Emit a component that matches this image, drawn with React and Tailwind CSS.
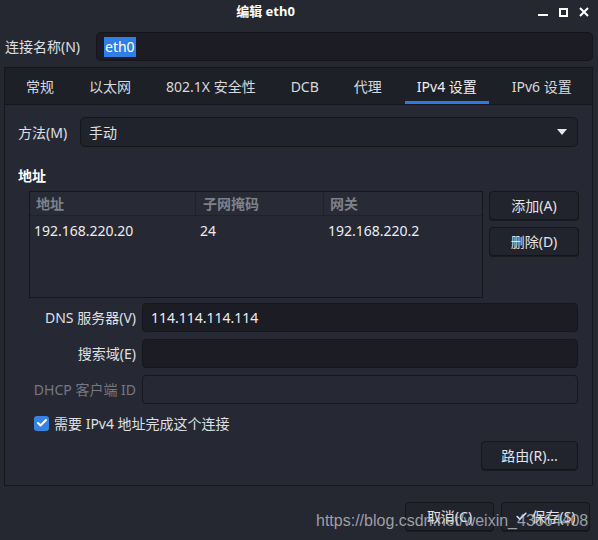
import { Check } from 'lucide-react'

const font = { fontFamily: '"Noto Sans", "Noto Sans CJK SC", sans-serif' }

const tabs = ['常规', '以太网', '802.1X 安全性', 'DCB', '代理', 'IPv4 设置', 'IPv6 设置']

function Button({ children, className = '' }) {
  return (
    <div className={`h-[29px] rounded-[4px] border border-[#15161b] bg-[#22242d] flex items-center justify-center text-[14px] text-[#e2e3e8] shadow-[0_1px_0_#1a1b20] ${className}`}>
      {children}
    </div>
  )
}

function Field({ label, value, disabled }) {
  return (
    <div className="flex items-center h-[29px]">
      <div className={`w-[124px] pr-[6px] text-right text-[14px] whitespace-nowrap ${disabled ? 'text-[#767984]' : 'text-[#dfe0e5]'}`}>{label}</div>
      <div className={`w-[436px] h-[29px] rounded-[4px] border flex items-center px-[8px] text-[14px] text-[#eceef2] ${disabled ? 'border-[#16171c] bg-[#262834]' : 'border-[#16171c] bg-[#1c1d24]'}`}>
        {value}
      </div>
    </div>
  )
}

export default function App() {
  return (
    <div style={font} className="relative w-[598px] h-[540px] overflow-hidden bg-[#252731] text-[#dfe0e5]">
      {/* Title bar */}
      <div className="h-[24px] flex items-center">
        <div className="flex-1" />
        <div className="mr-[58px] text-[13px] font-bold text-white">编辑 eth0</div>
        <div className="flex-1 flex justify-end items-center gap-[11px] pr-[9px]">
          <div className="w-[10px] h-[2px] bg-white mt-[6px]" />
          <div className="w-[9px] h-[9px] border-2 border-white" />
          <svg width="10" height="10" viewBox="0 0 10 10"><path d="M1 1L9 9M9 1L1 9" stroke="white" strokeWidth="2" /></svg>
        </div>
      </div>

      {/* Connection name */}
      <div className="flex items-center mt-[8px] pl-[5px]">
        <div className="w-[91px] text-[14px]">连接名称(N)</div>
        <div className="w-[497px] h-[29px] rounded-[5px] border border-[#14151a] bg-[#1c1d24] flex items-center px-[7px] text-[14px]">
          <span className="bg-[#2f7fe6] text-white px-[1px] leading-[20px]">eth0</span>
        </div>
      </div>

      {/* Notebook */}
      <div className="mx-[4px] mt-[6px] h-[419px] w-[589px] border border-[#15161b] bg-[#262833] flex flex-col">
        <div className="h-[37px] bg-[#1e2027] border-b border-[#15161b] flex items-stretch pl-[9px] gap-[11px] text-[14px]">
          {tabs.map(t => (
            <div key={t} className={`px-[12px] flex items-center relative whitespace-nowrap ${t === 'IPv4 设置' ? 'text-[#eef0f4]' : 'text-[#d8d9de]'}`}>
              {t}
              {t === 'IPv4 设置' && <div className="absolute left-0 right-0 bottom-0 h-[3px] bg-[#2d7be2]" />}
            </div>
          ))}
        </div>

        <div className="px-[13px] pt-[12px]">
          {/* Method */}
          <div className="flex items-center h-[30px]">
            <div className="w-[62px] text-[14px]">方法(M)</div>
            <div className="w-[498px] h-[30px] rounded-[5px] border border-[#15161b] bg-[#21232c] flex items-center justify-between pl-[8px] pr-[10px] text-[14px]">
              手动
              <svg width="10" height="6" viewBox="0 0 10 6"><path d="M0 0H10L5 6Z" fill="#e6e7ea" /></svg>
            </div>
          </div>

          <div className="mt-[18px] text-[14px] font-bold text-white">地址</div>

          {/* Address table + buttons */}
          <div className="flex mt-[5px] pl-[11px] gap-[6px]">
            <div className="w-[454px] h-[107px] border border-[#15161b] bg-[#262833]">
              <div className="h-[24px] flex items-center border-b border-[#202229] bg-[#282a35] text-[14px] font-bold text-[#7e818b]">
                <div className="w-[166px] pl-[6px] h-full flex items-center border-r border-[#202229]">地址</div>
                <div className="w-[128px] pl-[7px] h-full flex items-center border-r border-[#202229]">子网掩码</div>
                <div className="pl-[6px]">网关</div>
              </div>
              <div className="h-[28px] flex items-center text-[14px] text-[#eceef2]">
                <div className="w-[166px] pl-[4px]">192.168.220.20</div>
                <div className="w-[128px] pl-[4px]">24</div>
                <div className="pl-[4px]">192.168.220.2</div>
              </div>
            </div>
            <div className="flex flex-col gap-[7px]">
              <Button className="w-[90px]">添加(A)</Button>
              <Button className="w-[90px]">删除(D)</Button>
            </div>
          </div>

          {/* Fields */}
          <div className="mt-[5px] flex flex-col gap-[7px]">
            <Field label="DNS 服务器(V)" value="114.114.114.114" />
            <Field label="搜索域(E)" value="" />
            <Field label="DHCP 客户端 ID" value="" disabled />
          </div>

          <div className="flex items-center mt-[9px] pl-[16px] gap-[5px] text-[14px] h-[20px]">
            <div className="w-[15px] h-[15px] rounded-[3px] bg-[#3584e4] flex items-center justify-center">
              <Check size={12} strokeWidth={4} className="text-white" />
            </div>
            需要 IPv4 地址完成这个连接
          </div>

          <div className="flex justify-end mt-[8px] pr-[1px]">
            <Button className="w-[97px]">路由(R)...</Button>
          </div>
        </div>
      </div>

      {/* Bottom buttons */}
      <div className="flex justify-end gap-[7px] mt-[16px] pr-[8px]">
        <Button className="w-[89px]">取消(C)</Button>
        <Button className="w-[89px] gap-[3px]">
          <Check size={13} strokeWidth={3} />保存(S)
        </Button>
      </div>

      {/* Watermark */}
      <div
        className="absolute left-[316px] top-[509px] text-[16px] text-[#c8c9cc]/75 pointer-events-none"
        style={{ fontFamily: '"Liberation Sans", Arial, sans-serif' }}
      >
        https://blog.csdn.net/weixin_43664408
      </div>
    </div>
  )
}
